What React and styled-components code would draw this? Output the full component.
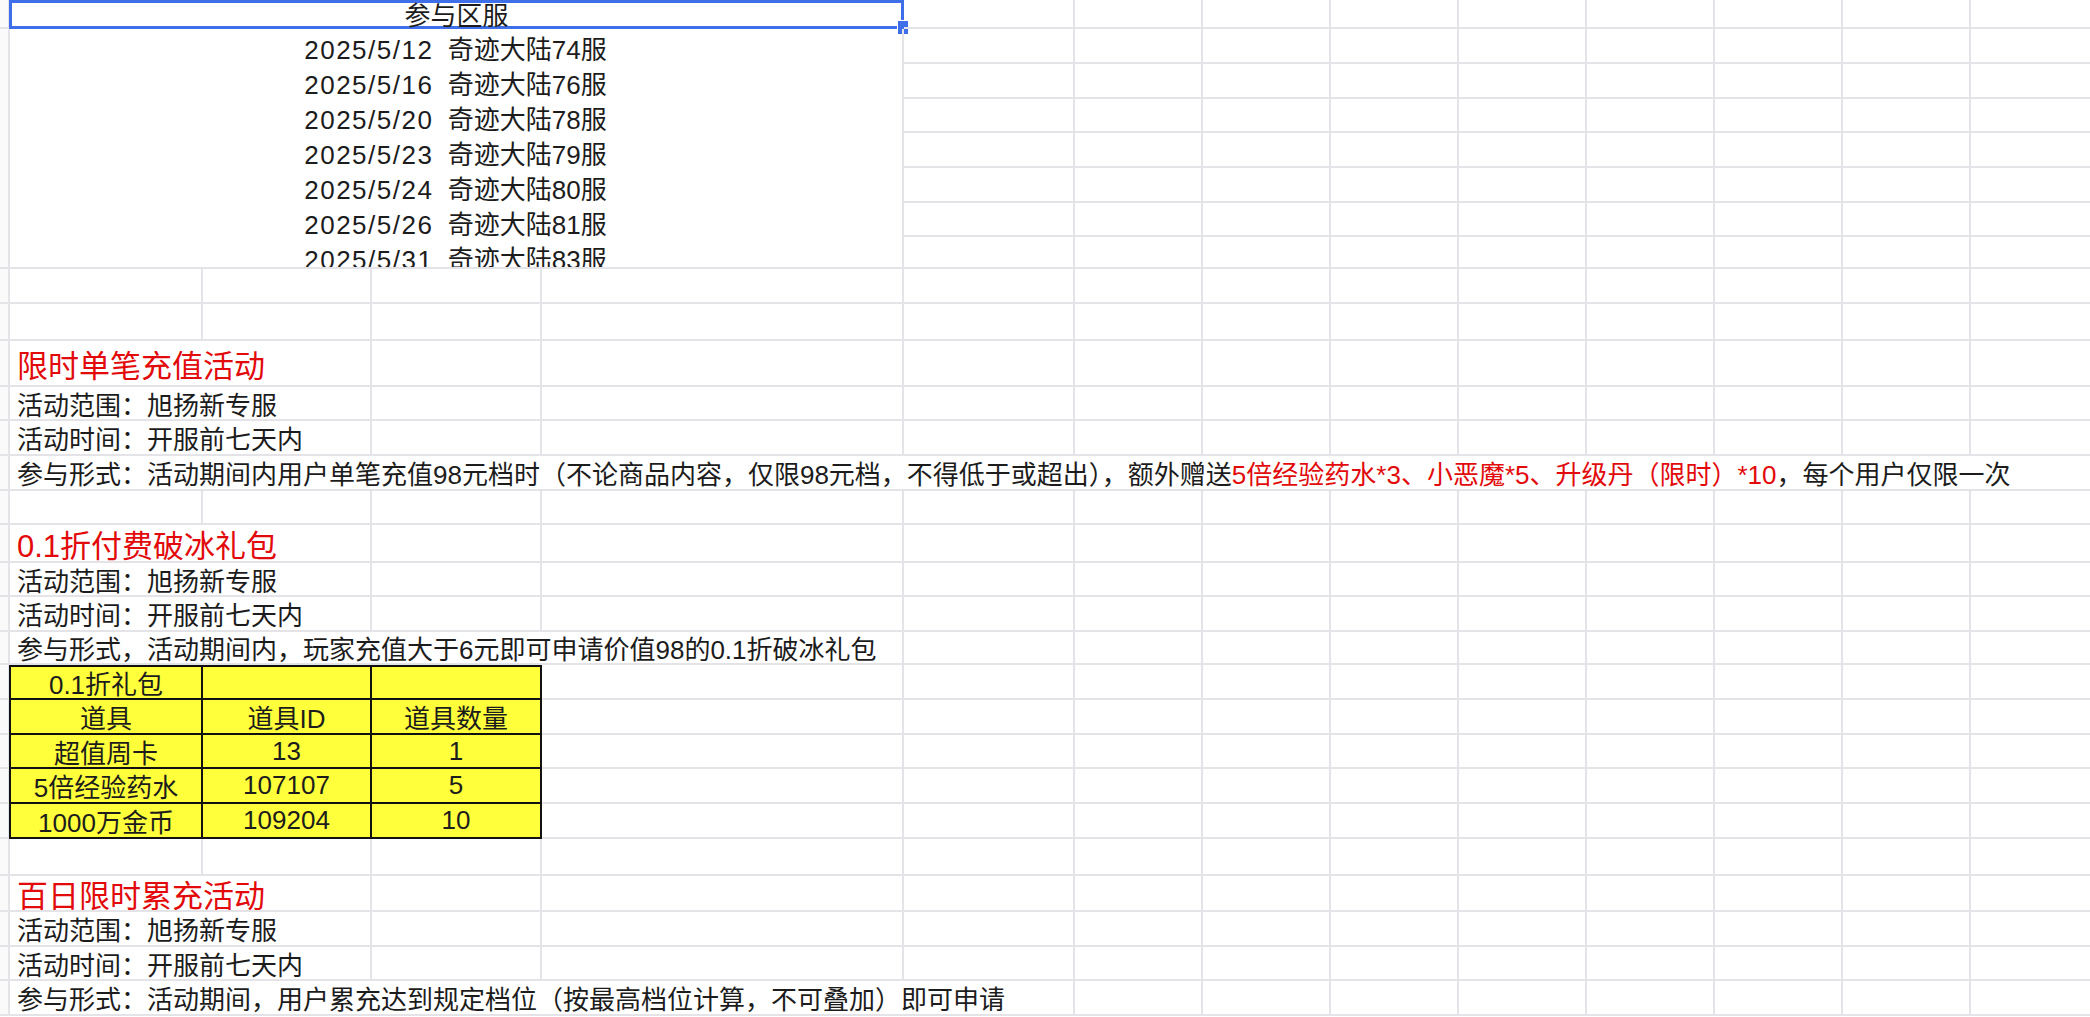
import React from "react";
import styled, { createGlobalStyle } from "styled-components";

const GlobalStyle = createGlobalStyle`
  html, body { margin: 0; padding: 0; background: #ffffff; overflow: hidden; }
  body { font-family: "Liberation Sans", "Noto Sans CJK SC", sans-serif; color: #1c1c1c; }
`;

const ROWS = [29, 35, 35, 34, 35, 35, 34, 32, 35, 37, 46, 34, 35, 35, 34, 38, 34, 35, 33, 35, 35, 34, 35, 35, 37, 36, 35, 34, 35];

const Sheet = styled.div`
  display: grid;
  grid-template-columns: 9px 194px 169px 170px 362px 171px repeat(8, 128px);
  grid-template-rows: ${ROWS.map((r) => r + "px").join(" ")};
  width: 2099px;
`;

const Cell = styled.div`
  grid-column: span ${(p) => p.$span || 1};
  grid-row: span ${(p) => p.$rows || 1};
  box-sizing: border-box;
  border-right: 2px solid #e3e3e8;
  border-bottom: 2px solid #e3e3e8;
  display: flex;
  align-items: center;
  justify-content: ${(p) => (p.$center ? "center" : "flex-start")};
  padding-left: ${(p) => (p.$center ? 0 : 8)}px;
  font-size: ${(p) => (p.$title ? 31 : 26)}px;
  color: ${(p) => (p.$title ? "#e20a0a" : "#1c1c1c")};
  white-space: nowrap;
  overflow: hidden;
  position: relative;
`;

const Gutter = styled(Cell)`
  background: #fafafa;
`;

const HeaderCell = styled(Cell)`
  border: 3px solid #3f6fe8;
  overflow: visible;
  padding-bottom: 2px;
`;

const Handle = styled.span`
  position: absolute;
  right: -8px;
  bottom: -9px;
  width: 10px;
  height: 13px;
  background: #3f6fe8;
  border: 1px solid #ffffff;
`;

const Merged = styled(Cell)`
  flex-direction: column;
  align-items: center;
  justify-content: flex-start;
  padding: 4px 0 0;
  line-height: 35px;
`;

const Date = styled.span`
  letter-spacing: 1.5px;
`;

const TableCell = styled(Cell)`
  background: #ffff3b;
  border-right: 2px solid #111;
  border-bottom: 2px solid #111;
  border-left: ${(p) => (p.$first ? "2px solid #111" : "none")};
  border-top: ${(p) => (p.$top ? "2px solid #111" : "none")};
  color: #1c1c1c;
`;

const Red = styled.span`
  color: #e20a0a;
`;

const servers = [
  ["2025/5/12", "奇迹大陆74服"],
  ["2025/5/16", "奇迹大陆76服"],
  ["2025/5/20", "奇迹大陆78服"],
  ["2025/5/23", "奇迹大陆79服"],
  ["2025/5/24", "奇迹大陆80服"],
  ["2025/5/26", "奇迹大陆81服"],
  ["2025/5/31", "奇迹大陆83服"],
];

const table = [
  ["0.1折礼包", "", ""],
  ["道具", "道具ID", "道具数量"],
  ["超值周卡", "13", "1"],
  ["5倍经验药水", "107107", "5"],
  ["1000万金币", "109204", "10"],
];

// blank cells after a text that spans `used` of the 13 data columns
const fill = (used, key) =>
  Array.from({ length: 13 - used }, (_, i) => <Cell key={key + i} />);

const Line = ({ text, span, title, id }) => (
  <>
    <Gutter />
    <Cell $span={span} $title={title}>{text}</Cell>
    {fill(span, id)}
  </>
);

const Empty = ({ id, widths = [1, 1, 1, 1] }) => (
  <>
    <Gutter />
    {widths.map((w, i) => <Cell key={i} $span={w} />)}
    {fill(widths.reduce((a, b) => a + b, 0), id)}
  </>
);

export default function App() {
  return (
    <>
      <GlobalStyle />
      <Sheet>
        <Gutter />
        <HeaderCell $span={4} $center>
          参与区服
          <Handle />
        </HeaderCell>
        {fill(4, "h")}

        <Gutter $rows={7} />
        <Merged $span={4} $rows={7}>
          {servers.map(([d, s]) => (
            <div key={d}><Date>{d}</Date>&nbsp;&nbsp;{s}</div>
          ))}
        </Merged>
        {Array.from({ length: 7 }, (_, r) => fill(4, "m" + r))}

        <Empty id="e1" />
        <Empty id="e2" />
        <Line id="t1" span={2} title text="限时单笔充值活动" />
        <Line id="a1" span={2} text="活动范围：旭扬新专服" />
        <Line id="b1" span={2} text="活动时间：开服前七天内" />
        <Gutter />
        <Cell $span={13}>
          参与形式：活动期间内用户单笔充值98元档时（不论商品内容，仅限98元档，不得低于或超出），额外赠送
          <Red>5倍经验药水*3、小恶魔*5、升级丹（限时）*10</Red>
          ，每个用户仅限一次
        </Cell>
        <Empty id="e3" />

        <Line id="t2" span={2} title text="0.1折付费破冰礼包" />
        <Line id="a2" span={2} text="活动范围：旭扬新专服" />
        <Line id="b2" span={2} text="活动时间：开服前七天内" />
        <Line id="c2" span={4} text="参与形式，活动期间内，玩家充值大于6元即可申请价值98的0.1折破冰礼包" />
        {table.map((row, r) => (
          <React.Fragment key={r}>
            <Gutter />
            {row.map((v, c) => (
              <TableCell key={c} $center $first={c === 0} $top={r === 0}>
                {v}
              </TableCell>
            ))}
            {fill(3, "tb" + r)}
          </React.Fragment>
        ))}
        <Empty id="e4" />

        <Line id="t3" span={2} title text="百日限时累充活动" />
        <Line id="a3" span={2} text="活动范围：旭扬新专服" />
        <Line id="b3" span={2} text="活动时间：开服前七天内" />
        <Line id="c3" span={5} text="参与形式：活动期间，用户累充达到规定档位（按最高档位计算，不可叠加）即可申请" />
      </Sheet>
    </>
  );
}
